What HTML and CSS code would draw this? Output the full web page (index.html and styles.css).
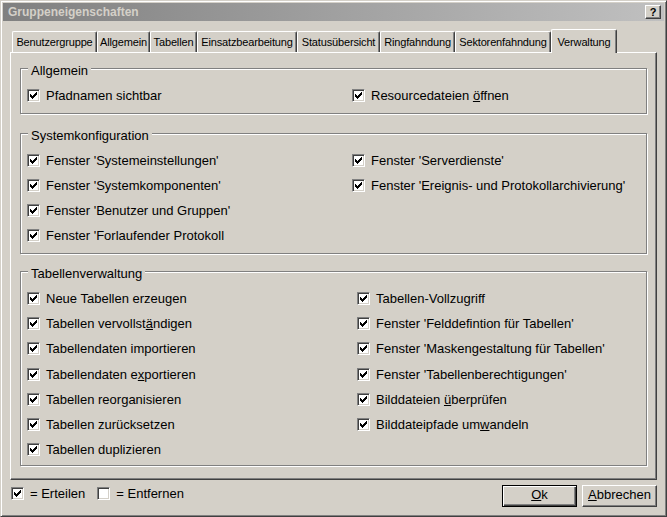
FILE: index.html
```html
<!DOCTYPE html>
<html lang="de">
<head>
<meta charset="utf-8">
<title>Gruppeneigenschaften</title>
<link rel="stylesheet" href="styles.css">
</head>
<body>
<div class="window">
  <div class="titlebar">
    <span class="title">Gruppeneigenschaften</span>
    <span class="help">?</span>
  </div>
  <div class="tabs">
    <div class="tab">Benutzergruppe</div>
    <div class="tab">Allgemein</div>
    <div class="tab">Tabellen</div>
    <div class="tab">Einsatzbearbeitung</div>
    <div class="tab">Statusübersicht</div>
    <div class="tab">Ringfahndung</div>
    <div class="tab">Sektorenfahndung</div>
    <div class="tab active">Verwaltung</div>
  </div>
  <div class="panel">
    <div class="group g1">
      <div class="legend">Allgemein</div>
      <div class="cols">
        <div class="col">
          <div class="row"><span class="cb"><svg class="check" viewBox="0 0 7 7" width="7" height="7"><path d="M0 2h1v3H0zM1 3h1v3H1zM2 4h1v3H2zM3 3h1v3H3zM4 2h1v3H4zM5 1h1v3H5zM6 0h1v3H6z"/></svg></span><span>Pfadnamen sichtbar</span></div>
        </div>
        <div class="col">
          <div class="row"><span class="cb"><svg class="check" viewBox="0 0 7 7" width="7" height="7"><path d="M0 2h1v3H0zM1 3h1v3H1zM2 4h1v3H2zM3 3h1v3H3zM4 2h1v3H4zM5 1h1v3H5zM6 0h1v3H6z"/></svg></span><span>Resourcedateien <span class="u">ö</span>ffnen</span></div>
        </div>
      </div>
    </div>
    <div class="group g2">
      <div class="legend">Systemkonfiguration</div>
      <div class="cols">
        <div class="col">
          <div class="row"><span class="cb"><svg class="check" viewBox="0 0 7 7" width="7" height="7"><path d="M0 2h1v3H0zM1 3h1v3H1zM2 4h1v3H2zM3 3h1v3H3zM4 2h1v3H4zM5 1h1v3H5zM6 0h1v3H6z"/></svg></span><span>Fenster 'Systemeinstellungen'</span></div>
          <div class="row"><span class="cb"><svg class="check" viewBox="0 0 7 7" width="7" height="7"><path d="M0 2h1v3H0zM1 3h1v3H1zM2 4h1v3H2zM3 3h1v3H3zM4 2h1v3H4zM5 1h1v3H5zM6 0h1v3H6z"/></svg></span><span>Fenster 'Systemkomponenten'</span></div>
          <div class="row"><span class="cb"><svg class="check" viewBox="0 0 7 7" width="7" height="7"><path d="M0 2h1v3H0zM1 3h1v3H1zM2 4h1v3H2zM3 3h1v3H3zM4 2h1v3H4zM5 1h1v3H5zM6 0h1v3H6z"/></svg></span><span>Fenster 'Benutzer und Gruppen'</span></div>
          <div class="row"><span class="cb"><svg class="check" viewBox="0 0 7 7" width="7" height="7"><path d="M0 2h1v3H0zM1 3h1v3H1zM2 4h1v3H2zM3 3h1v3H3zM4 2h1v3H4zM5 1h1v3H5zM6 0h1v3H6z"/></svg></span><span>Fenster 'Forlaufender Protokoll</span></div>
        </div>
        <div class="col">
          <div class="row"><span class="cb"><svg class="check" viewBox="0 0 7 7" width="7" height="7"><path d="M0 2h1v3H0zM1 3h1v3H1zM2 4h1v3H2zM3 3h1v3H3zM4 2h1v3H4zM5 1h1v3H5zM6 0h1v3H6z"/></svg></span><span>Fenster 'Serverdienste'</span></div>
          <div class="row"><span class="cb"><svg class="check" viewBox="0 0 7 7" width="7" height="7"><path d="M0 2h1v3H0zM1 3h1v3H1zM2 4h1v3H2zM3 3h1v3H3zM4 2h1v3H4zM5 1h1v3H5zM6 0h1v3H6z"/></svg></span><span>Fenster 'Ereignis- und Protokollarchivierung'</span></div>
        </div>
      </div>
    </div>
    <div class="group g3">
      <div class="legend">Tabellenverwaltung</div>
      <div class="cols">
        <div class="col">
          <div class="row"><span class="cb"><svg class="check" viewBox="0 0 7 7" width="7" height="7"><path d="M0 2h1v3H0zM1 3h1v3H1zM2 4h1v3H2zM3 3h1v3H3zM4 2h1v3H4zM5 1h1v3H5zM6 0h1v3H6z"/></svg></span><span>Neue Tabellen erzeugen</span></div>
          <div class="row"><span class="cb"><svg class="check" viewBox="0 0 7 7" width="7" height="7"><path d="M0 2h1v3H0zM1 3h1v3H1zM2 4h1v3H2zM3 3h1v3H3zM4 2h1v3H4zM5 1h1v3H5zM6 0h1v3H6z"/></svg></span><span>Tabellen vervollst<span class="u">ä</span>ndigen</span></div>
          <div class="row"><span class="cb"><svg class="check" viewBox="0 0 7 7" width="7" height="7"><path d="M0 2h1v3H0zM1 3h1v3H1zM2 4h1v3H2zM3 3h1v3H3zM4 2h1v3H4zM5 1h1v3H5zM6 0h1v3H6z"/></svg></span><span>Tabellendaten importieren</span></div>
          <div class="row"><span class="cb"><svg class="check" viewBox="0 0 7 7" width="7" height="7"><path d="M0 2h1v3H0zM1 3h1v3H1zM2 4h1v3H2zM3 3h1v3H3zM4 2h1v3H4zM5 1h1v3H5zM6 0h1v3H6z"/></svg></span><span>Tabellendaten e<span class="u">x</span>portieren</span></div>
          <div class="row"><span class="cb"><svg class="check" viewBox="0 0 7 7" width="7" height="7"><path d="M0 2h1v3H0zM1 3h1v3H1zM2 4h1v3H2zM3 3h1v3H3zM4 2h1v3H4zM5 1h1v3H5zM6 0h1v3H6z"/></svg></span><span>Tabellen reorganisieren</span></div>
          <div class="row"><span class="cb"><svg class="check" viewBox="0 0 7 7" width="7" height="7"><path d="M0 2h1v3H0zM1 3h1v3H1zM2 4h1v3H2zM3 3h1v3H3zM4 2h1v3H4zM5 1h1v3H5zM6 0h1v3H6z"/></svg></span><span>Tabellen zurücksetzen</span></div>
          <div class="row"><span class="cb"><svg class="check" viewBox="0 0 7 7" width="7" height="7"><path d="M0 2h1v3H0zM1 3h1v3H1zM2 4h1v3H2zM3 3h1v3H3zM4 2h1v3H4zM5 1h1v3H5zM6 0h1v3H6z"/></svg></span><span>Tabellen duplizieren</span></div>
        </div>
        <div class="col">
          <div class="row"><span class="cb"><svg class="check" viewBox="0 0 7 7" width="7" height="7"><path d="M0 2h1v3H0zM1 3h1v3H1zM2 4h1v3H2zM3 3h1v3H3zM4 2h1v3H4zM5 1h1v3H5zM6 0h1v3H6z"/></svg></span><span>Tabellen-Vollzugriff</span></div>
          <div class="row"><span class="cb"><svg class="check" viewBox="0 0 7 7" width="7" height="7"><path d="M0 2h1v3H0zM1 3h1v3H1zM2 4h1v3H2zM3 3h1v3H3zM4 2h1v3H4zM5 1h1v3H5zM6 0h1v3H6z"/></svg></span><span>Fenster 'Felddefintion für Tabellen'</span></div>
          <div class="row"><span class="cb"><svg class="check" viewBox="0 0 7 7" width="7" height="7"><path d="M0 2h1v3H0zM1 3h1v3H1zM2 4h1v3H2zM3 3h1v3H3zM4 2h1v3H4zM5 1h1v3H5zM6 0h1v3H6z"/></svg></span><span>Fenster 'Maskengestaltung für Tabellen'</span></div>
          <div class="row"><span class="cb"><svg class="check" viewBox="0 0 7 7" width="7" height="7"><path d="M0 2h1v3H0zM1 3h1v3H1zM2 4h1v3H2zM3 3h1v3H3zM4 2h1v3H4zM5 1h1v3H5zM6 0h1v3H6z"/></svg></span><span>Fenster 'Tabellenberechtigungen'</span></div>
          <div class="row"><span class="cb"><svg class="check" viewBox="0 0 7 7" width="7" height="7"><path d="M0 2h1v3H0zM1 3h1v3H1zM2 4h1v3H2zM3 3h1v3H3zM4 2h1v3H4zM5 1h1v3H5zM6 0h1v3H6z"/></svg></span><span>Bilddateien <span class="u">ü</span>berprüfen</span></div>
          <div class="row"><span class="cb"><svg class="check" viewBox="0 0 7 7" width="7" height="7"><path d="M0 2h1v3H0zM1 3h1v3H1zM2 4h1v3H2zM3 3h1v3H3zM4 2h1v3H4zM5 1h1v3H5zM6 0h1v3H6z"/></svg></span><span>Bilddateipfade um<span class="u">w</span>andeln</span></div>
        </div>
      </div>
    </div>
  </div>
  <div class="bottom">
    <div class="key">
      <span class="cb"><svg class="check" viewBox="0 0 7 7" width="7" height="7"><path d="M0 2h1v3H0zM1 3h1v3H1zM2 4h1v3H2zM3 3h1v3H3zM4 2h1v3H4zM5 1h1v3H5zM6 0h1v3H6z"/></svg></span><span class="key-text">= Erteilen</span>
      <span class="cb"></span><span class="key-text">= Entfernen</span>
    </div>
    <div class="buttons">
      <div class="btn default"><span><span class="u">O</span>k</span></div>
      <div class="btn"><span><span class="u">A</span>bbrechen</span></div>
    </div>
  </div>
</div>
</body>
</html>
```
FILE: styles.css
```css
* { box-sizing: border-box; }
html, body { margin: 0; padding: 0; }
body {
  background: #d4d0c8;
  font-family: "Liberation Sans", Arial, sans-serif;
  font-size: 13px;
  color: #000;
  width: 667px;
  height: 517px;
  overflow: hidden;
}
.window {
  width: 667px;
  height: 517px;
  border: 1px solid;
  border-color: #d4d0c8 #404040 #404040 #d4d0c8;
  box-shadow: inset 1px 1px #fff, inset -1px -1px #808080;
  padding: 2px;
  display: flex;
  flex-direction: column;
}
.titlebar {
  height: 18px;
  flex: none;
  background: linear-gradient(to right, #808080, #c0c0c0);
  display: flex;
  align-items: center;
  justify-content: space-between;
  padding: 0 3px 0 5px;
}
.title {
  font-weight: bold;
  font-size: 12px;
  line-height: 14px;
  color: #d4d0c8;
}
.help {
  width: 16px;
  height: 14px;
  background: #d4d0c8;
  border: 1px solid;
  border-color: #fff #404040 #404040 #fff;
  box-shadow: inset -1px -1px #808080;
  font-weight: bold;
  font-size: 11px;
  line-height: 12px;
  text-align: center;
}
.tabs {
  display: flex;
  align-items: flex-end;
  height: 23px;
  flex: none;
  margin: 8px 0 0 9px;
  position: relative;
  z-index: 1;
}
.tab {
  flex: none;
  height: 21px;
  padding: 4px 0 0;
  font-size: 11px;
  line-height: 13px;
  letter-spacing: -0.15px;
  text-align: center;
  white-space: nowrap;
  border-top: 1px solid #fff;
  border-left: 1px solid #fff;
  border-right: 1px solid #404040;
  box-shadow: inset -1px 0 #808080;
  border-top-left-radius: 2px;
  border-top-right-radius: 2px;
  background: #d4d0c8;
}
.tab:nth-child(1) { width: 85px; }
.tab:nth-child(2) { width: 53px; }
.tab:nth-child(3) { width: 47px; }
.tab:nth-child(4) { width: 100px; }
.tab:nth-child(5) { width: 83px; }
.tab:nth-child(6) { width: 75px; }
.tab:nth-child(7) { width: 96px; }
.tab.active {
  width: 66px;
  height: 24px;
  margin: 0 0 -1px 0;
  padding: 6px 0 0;
}
.panel {
  flex: none;
  margin: 0 7px;
  height: 428px;
  border: 1px solid;
  border-color: #fff #404040 #404040 #fff;
  box-shadow: inset -1px -1px #808080;
  padding: 0 9px;
}
.group {
  border: 1px solid #808080;
  box-shadow: inset 1px 1px #fff, 1px 1px #fff;
  padding: 0 0 5px 6px;
}
.g1 { margin-top: 15px; }
.g2 { margin-top: 19px; }
.g3 { margin-top: 17px; padding-bottom: 3px; }
.legend {
  display: table;
  margin: -6px 0 5px 1px;
  padding: 0 3px;
  background: #d4d0c8;
  line-height: 15px;
  white-space: nowrap;
}
.cols { display: flex; }
.col { width: 325px; flex: none; }
.g3 .col:first-child { width: 330px; }
.row {
  height: 25px;
  display: flex;
  align-items: center;
  gap: 6px;
  line-height: 15px;
  white-space: nowrap;
}
.g3 .row { height: 25.2px; }
.cb {
  width: 13px;
  height: 13px;
  flex: none;
  display: block;
  padding: 2px;
  background: #fff;
  border: 1px solid;
  border-color: #808080 #fff #fff #808080;
  box-shadow: inset 1px 1px #404040, inset -1px -1px #d4d0c8;
}
.check {
  display: block;
  fill: #000;
  shape-rendering: crispEdges;
}
.u {
  text-decoration: underline;
  text-underline-offset: 1px;
}
.bottom {
  flex: none;
  display: flex;
  justify-content: space-between;
  align-items: flex-start;
  margin: 5px 7px 0;
  height: 22px;
}
.key {
  display: flex;
  align-items: center;
  height: 17px;
  padding-left: 1px;
  line-height: 15px;
  white-space: nowrap;
}
.key .cb { margin-right: 6px; }
.key-text { margin-right: 12px; }
.buttons {
  display: flex;
  gap: 5px;
}
.btn {
  width: 75px;
  height: 22px;
  display: flex;
  justify-content: center;
  align-items: flex-start;
  padding-top: 1px;
  line-height: 15px;
  background: #d4d0c8;
  border: 1px solid;
  border-color: #fff #404040 #404040 #fff;
  box-shadow: inset -1px -1px #808080;
}
.btn.default {
  border-color: #000;
  box-shadow: inset 1px 1px #fff, inset -1px -1px #404040, inset -2px -2px #808080;
}
```
